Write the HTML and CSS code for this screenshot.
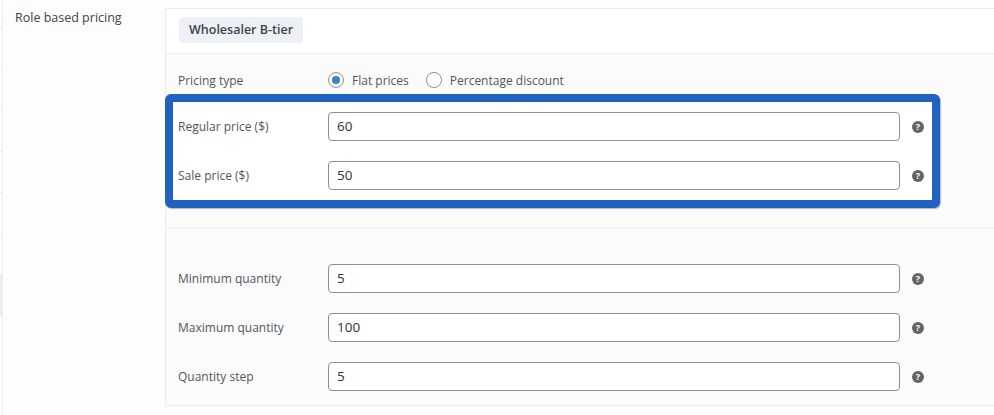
FILE: index.html
```html
<!DOCTYPE html>
<html lang="en">
<head>
<meta charset="utf-8">
<title>Role based pricing</title>
<link rel="stylesheet" href="styles.css">
</head>
<body>
<div class="page">
  <div class="rail">
    <div class="tick"></div><div class="tick"></div><div class="tick"></div>
    <div class="tick"></div><div class="tick"></div><div class="tick"></div>
    <div class="rail-block"></div>
  </div>
  <div class="side-label">Role based pricing</div>
  <div class="panel">
    <div class="panel-head">
      <span class="tab">Wholesaler B-tier</span>
    </div>
    <div class="panel-body">
      <div class="type-row">
        <span class="label">Pricing type</span>
        <label class="radio"><span class="dot checked"></span>Flat prices</label>
        <label class="radio"><span class="dot"></span>Percentage discount</label>
      </div>
      <div class="highlight">
        <div class="row">
          <span class="label">Regular price ($)</span>
          <div class="input">60</div>
          <span class="help">?</span>
        </div>
        <div class="row">
          <span class="label">Sale price ($)</span>
          <div class="input">50</div>
          <span class="help">?</span>
        </div>
      </div>
      <div class="qty">
        <div class="row">
          <span class="label">Minimum quantity</span>
          <div class="input">5</div>
          <span class="help">?</span>
        </div>
        <div class="row">
          <span class="label">Maximum quantity</span>
          <div class="input">100</div>
          <span class="help">?</span>
        </div>
        <div class="row">
          <span class="label">Quantity step</span>
          <div class="input">5</div>
          <span class="help">?</span>
        </div>
      </div>
    </div>
  </div>
</div>
</body>
</html>
```

FILE: styles.css
```css
html, body {
  margin: 0;
  padding: 0;
  background: #fdfdfd;
}
body {
  font-family: "Open Sans", "Noto Sans", sans-serif;
  color: #3c434a;
  width: 994px;
  height: 415px;
  overflow: hidden;
}
.page {
  display: flex;
  height: 415px;
}
.rail {
  width: 2px;
  border-right: 1px solid #eeeeee;
  display: flex;
  flex-direction: column;
  padding-top: 28px;
  flex: none;
}
.tick {
  height: 40px;
  border-top: 1px solid #eaeaea;
}
.rail-block {
  height: 42px;
  background: #ececec;
}
.side-label {
  width: 150px;
  padding: 8px 0 0 12px;
  font-size: 12.5px;
  line-height: 20px;
  flex: none;
}
.panel {
  flex: 1;
  margin-top: 8px;
  height: 398px;
  border: 1px solid #ebebeb;
  border-right: none;
  background: #fbfbfb;
  box-sizing: border-box;
}
.panel-head {
  height: 45px;
  background: #ffffff;
  border-bottom: 1px solid #ebebeb;
  box-sizing: border-box;
  padding: 8px 0 0 13px;
}
.tab {
  display: inline-block;
  height: 26px;
  line-height: 26px;
  padding: 0 10px;
  background: #edf0f4;
  border-radius: 4px;
  font-size: 12.5px;
  font-weight: 600;
  color: #3c434a;
}
.type-row {
  display: flex;
  align-items: center;
  height: 20px;
  margin-top: 16px;
  padding-left: 12px;
}
.label {
  width: 150px;
  flex: none;
  font-size: 12px;
  color: #50575e;
}
.radio {
  display: flex;
  align-items: center;
  font-size: 12px;
  color: #50575e;
  margin-right: 17px;
}
.dot {
  width: 14px;
  height: 14px;
  border: 1px solid #8c8f94;
  border-radius: 50%;
  background: #ffffff;
  margin-right: 8px;
  display: flex;
  align-items: center;
  justify-content: center;
}
.dot.checked::after {
  content: "";
  width: 8px;
  height: 8px;
  border-radius: 50%;
  background: #3582c4;
}
.highlight {
  margin: 4px 0 0 -1px;
  width: 775px;
  box-sizing: border-box;
  border: 8px solid #1f62bf;
  border-radius: 6px;
  background: #ffffff;
  padding: 10px 0 10px 5px;
  box-shadow: 1px 1px 1px rgba(0, 0, 0, 0.28);
  display: flex;
  flex-direction: column;
  gap: 20px;
}
.row {
  display: flex;
  align-items: center;
}
.input {
  width: 572px;
  height: 29px;
  box-sizing: border-box;
  border: 1px solid #8c8f94;
  border-radius: 4px;
  background: #ffffff;
  padding-left: 8px;
  font-size: 13.5px;
  line-height: 27px;
  color: #2c3338;
  flex: none;
}
.help {
  width: 12px;
  height: 12px;
  margin-left: 12px;
  border-radius: 50%;
  background: #646464;
  color: #ffffff;
  font-size: 9px;
  font-weight: 700;
  line-height: 12px;
  text-align: center;
  flex: none;
}
.qty {
  margin-top: 20px;
  border-top: 1px solid #f0f0f0;
  padding: 35px 0 0 12px;
  display: flex;
  flex-direction: column;
  gap: 20px;
}
```
